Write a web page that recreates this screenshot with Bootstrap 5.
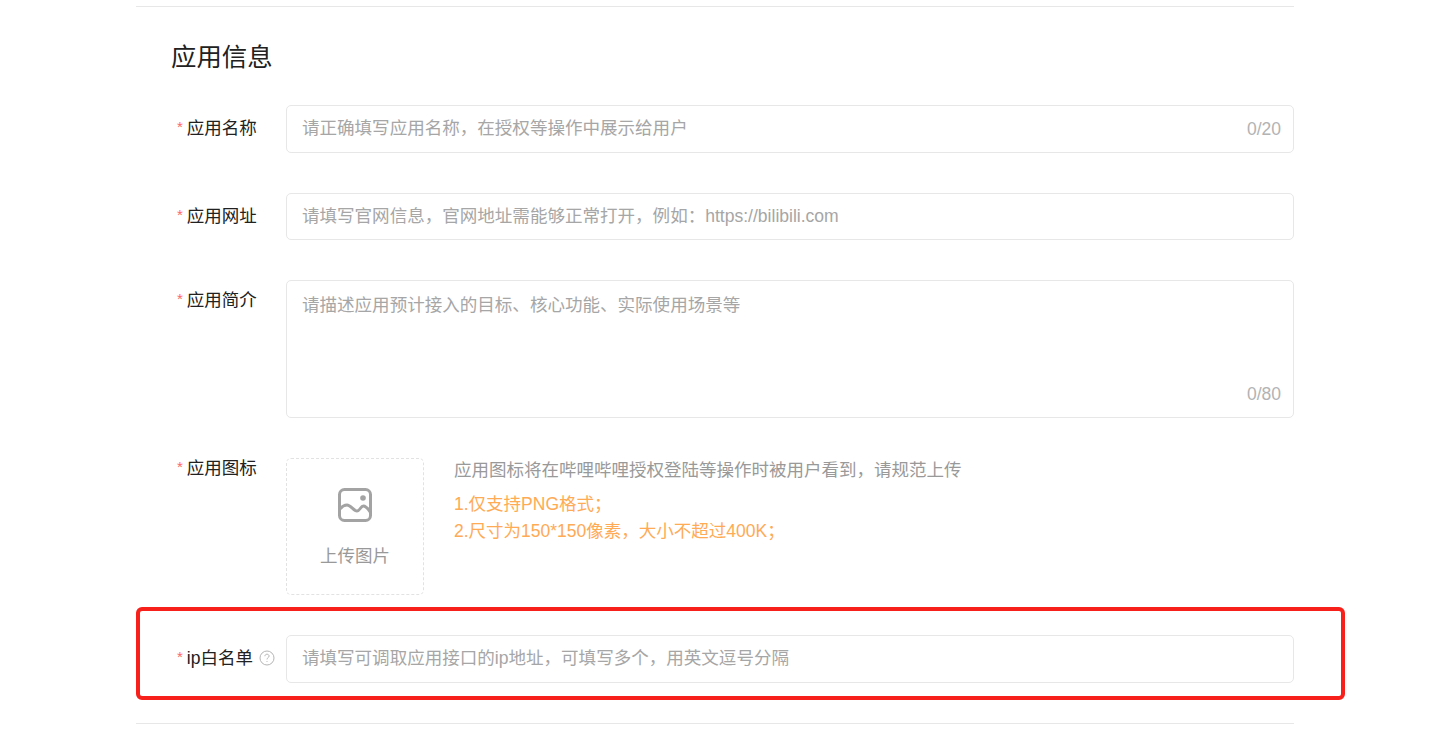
<!DOCTYPE html>
<html lang="zh-CN">
<head>
  <meta charset="UTF-8">
  <meta name="viewport" content="width=device-width, initial-scale=1">
  <title>应用信息</title>
  <link href="https://cdn.jsdelivr.net/npm/bootstrap@5.3.0/dist/css/bootstrap.min.css" rel="stylesheet">
  <style>
    body {
      background-color: #fff;
      color: #212121;
      font-family: "Liberation Sans", "Noto Sans CJK SC", sans-serif;
      font-size: 17.5px;
      overflow: hidden;
    }
    .page-wrap {
      width: 1158px;
      margin-left: 136px;
      padding-top: 6px;
      position: relative;
    }
    .rule {
      border-top: 1px solid #e7e7e7;
    }
    .form-title {
      font-size: 25.4px;
      font-weight: 400;
      line-height: 35px;
      margin: 33px 0 30px 35px;
    }
    .form-line {
      margin-bottom: 40px;
    }
    .form-name {
      width: 150px;
      flex: none;
      padding-left: 41px;
      line-height: 47px;
      margin: 0;
      white-space: nowrap;
    }
    .form-name-area {
      line-height: 40px;
    }
    .form-name-icon {
      line-height: 20px;
    }
    .req {
      color: #f66;
      font-size: 15px;
      line-height: 1;
      margin-right: 4px;
      vertical-align: 2px;
    }
    .form-control.app-input {
      height: 47.5px;
      border: 1px solid #e7e7e7;
      border-radius: 5px;
      padding: 0 15px;
      font-size: 17.55px;
      color: #212121;
      box-shadow: none;
    }
    .form-control.app-input::placeholder {
      color: #a6a6a6;
    }
    textarea.form-control.app-input {
      height: 138px;
      padding-top: 11px;
      line-height: 26px;
      resize: none;
    }
    .counter {
      position: absolute;
      right: 13px;
      color: #b3b3b3;
      line-height: 24px;
    }
    .counter-mid {
      top: 12px;
    }
    .counter-low {
      bottom: 12px;
    }
    .upload-box {
      width: 138px;
      height: 137px;
      flex: none;
      border: 1px dashed #e2e2e2;
      border-radius: 5px;
      color: #999;
      padding-top: 29px;
    }
    .upload-label {
      margin-top: 21px;
      line-height: 26px;
    }
    .upload-hint {
      margin-left: 30px;
      color: #999;
      line-height: 24px;
    }
    .upload-rules {
      color: #ffaa55;
      line-height: 27px;
      margin-top: 9px;
    }
    .help-mark {
      margin-left: 6px;
      vertical-align: -2px;
    }
    .red-box {
      position: absolute;
      left: 0;
      top: 607px;
      width: 1209px;
      height: 93px;
      border: 4px solid #f8201a;
      border-radius: 6px;
      pointer-events: none;
    }
  </style>
</head>
<body>

<div class="page-wrap">
  <div class="rule"></div>
  <h1 class="form-title">应用信息</h1>

  <form>
    <div class="d-flex form-line">
      <label class="form-name"><span class="req">*</span>应用名称</label>
      <div class="flex-grow-1 position-relative">
        <input type="text" class="form-control app-input" placeholder="请正确填写应用名称，在授权等操作中展示给用户">
        <span class="counter counter-mid">0/20</span>
      </div>
    </div>

    <div class="d-flex form-line">
      <label class="form-name"><span class="req">*</span>应用网址</label>
      <div class="flex-grow-1">
        <input type="text" class="form-control app-input" placeholder="请填写官网信息，官网地址需能够正常打开，例如：https://bilibili.com">
      </div>
    </div>

    <div class="d-flex form-line">
      <label class="form-name form-name-area"><span class="req">*</span>应用简介</label>
      <div class="flex-grow-1 position-relative">
        <textarea class="form-control app-input" placeholder="请描述应用预计接入的目标、核心功能、实际使用场景等"></textarea>
        <span class="counter counter-low">0/80</span>
      </div>
    </div>

    <div class="d-flex form-line">
      <label class="form-name form-name-icon"><span class="req">*</span>应用图标</label>
      <div class="upload-box d-flex flex-column align-items-center">
        <svg width="34" height="34" viewBox="0 0 34 34" fill="none" stroke="#a3a3a3" stroke-width="3" stroke-linejoin="round">
          <rect x="1.500" y="1.500" width="31" height="31" rx="5"/>
          <path d="M2 21c2-2.500 4.500-4 7-4 4 0 6.500 6 10 6 3 0 3.500-5 6.500-5 3 0 5.500 4 7.500 7"/>
          <circle cx="25" cy="10" r="2.800" fill="#a3a3a3" stroke="none"/>
        </svg>
        <div class="upload-label">上传图片</div>
      </div>
      <div class="upload-hint">
        <div>应用图标将在哔哩哔哩授权登陆等操作时被用户看到，请规范上传</div>
        <div class="upload-rules">
          <div>1.仅支持PNG格式；</div>
          <div>2.尺寸为150*150像素，大小不超过400K；</div>
        </div>
      </div>
    </div>

    <div class="d-flex form-line">
      <label class="form-name"><span class="req">*</span>ip白名单<svg class="help-mark" width="16" height="16" viewBox="0 0 16 16" fill="none" stroke="#b5b5b5"><circle cx="8" cy="8" r="7"/><path d="M5.900 6.200c0-1.200 1-2 2.100-2s2.100.8 2.100 1.900c0 1.500-2.100 1.500-2.100 3.300"/><circle cx="8" cy="11.500" r=".6" fill="#b5b5b5" stroke="none"/></svg></label>
      <div class="flex-grow-1">
        <input type="text" class="form-control app-input" placeholder="请填写可调取应用接口的ip地址，可填写多个，用英文逗号分隔">
      </div>
    </div>
  </form>

  <div class="rule"></div>
  <div class="red-box"></div>
</div>

<script src="https://cdn.jsdelivr.net/npm/bootstrap@5.3.0/dist/js/bootstrap.bundle.min.js"></script>
</body>
</html>
